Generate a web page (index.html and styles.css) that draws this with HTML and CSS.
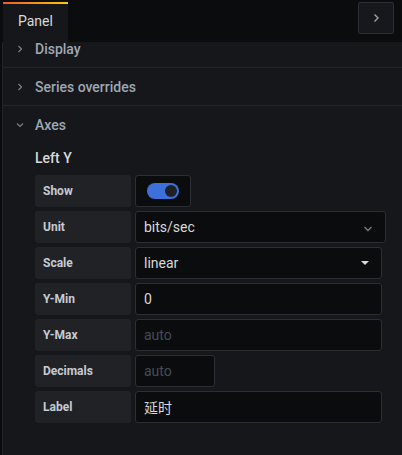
FILE: index.html
```html
<!DOCTYPE html>
<html lang="en">
<head>
    <meta charset="UTF-8">
    <title>Panel editor</title>
    <link rel="stylesheet" href="styles.css">
</head>
<body>

<div class="topbar">
    <div class="tab">Panel</div>
    <button class="collapse-btn">
        <svg width="10" height="10" viewBox="0 0 10 10"><path d="M3.5 1.5 L7 5 L3.5 8.5" fill="none" stroke="#9fa1a6" stroke-width="1.4"/></svg>
    </button>
</div>

<div class="panel">
    <div class="section first">
        <svg class="chev" width="8" height="8" viewBox="0 0 8 8"><path d="M2.5 1 L5.5 4 L2.5 7" fill="none" stroke="#7b8087" stroke-width="1.2"/></svg>Display
    </div>
    <div class="section">
        <svg class="chev" width="8" height="8" viewBox="0 0 8 8"><path d="M2.5 1 L5.5 4 L2.5 7" fill="none" stroke="#7b8087" stroke-width="1.2"/></svg>Series overrides
    </div>
    <div class="section open">
        <svg class="chev" width="8" height="8" viewBox="0 0 8 8"><path d="M1 2.5 L4 5.5 L7 2.5" fill="none" stroke="#7b8087" stroke-width="1.2"/></svg>Axes
    </div>

    <div class="axis">
        <h3>Left Y</h3>
        <div class="field">
            <label>Show</label>
            <div class="switch-box"><span class="switch"><span class="knob"></span></span></div>
        </div>
        <div class="field">
            <label>Unit</label>
            <div class="input select wide">bits/sec
                <svg class="arrow" width="10" height="6" viewBox="0 0 10 6"><path d="M1.5 1 L5 4.5 L8.5 1" fill="none" stroke="#7b8087" stroke-width="1.3"/></svg>
            </div>
        </div>
        <div class="field">
            <label>Scale</label>
            <div class="input select">linear
                <svg class="arrow" width="8" height="4" viewBox="0 0 8 4"><path d="M0 0 L8 0 L4 4 Z" fill="#d8d9da"/></svg>
            </div>
        </div>
        <div class="field">
            <label>Y-Min</label>
            <div class="input">0</div>
        </div>
        <div class="field">
            <label>Y-Max</label>
            <div class="input placeholder">auto</div>
        </div>
        <div class="field">
            <label>Decimals</label>
            <div class="input small placeholder">auto</div>
        </div>
        <div class="field">
            <label>Label</label>
            <div class="input">延时</div>
        </div>
    </div>
</div>

</body>
</html>
```

FILE: styles.css
```css
body { margin: 0; background-color: #0b0c0e; font-family: Roboto, "Noto Sans CJK SC", sans-serif; color: #ccccdc; height: 455px; display: flex; flex-direction: column; overflow: hidden; }

.topbar { height: 42px; display: flex; align-items: flex-start; flex-shrink: 0; }
.tab { margin: 2px 0 0 3px; width: 50px; height: 38px; padding-left: 15px; background-color: #16171b; border-top: 2px solid transparent; border-image: linear-gradient(90deg, #f05a28, #fbca0a) 1; font-size: 14px; line-height: 35px; color: #d8d9da; }
.collapse-btn { margin: 2px 8px 0 auto; width: 36px; height: 32px; background-color: #17181c; border: 1px solid #2c2e33; border-radius: 2px; display: flex; align-items: center; justify-content: center; padding: 0; }

.panel { flex: 1; margin-left: 2px; border-left: 1px solid #222428; background-color: #16171b; overflow: hidden; }
.section { height: 37px; border-bottom: 1px solid #222428; display: flex; align-items: center; font-size: 14px; font-weight: 500; color: #9fa7b3; }
.section.first { margin-top: -12px; }
.section.open { border-bottom: none; }
.chev { margin: 0 11px 0 13px; flex-shrink: 0; }

.axis { padding: 0 0 0 32px; }
.axis h3 { margin: 7px 0 9px; font-size: 14px; font-weight: 500; color: #d8d9da; line-height: 16px; }

.field { display: flex; gap: 4px; margin-bottom: 4px; height: 32px; }
.field label { width: 88px; padding-left: 8px; background-color: #202226; border-radius: 3px; font-size: 12px; font-weight: 700; color: #c7cbd1; display: flex; align-items: center; }
.input { width: 237px; padding: 0 0 0 8px; background-color: #0b0c0e; border: 1px solid #2c2e33; border-radius: 3px; font-size: 14px; color: #d8d9da; display: flex; align-items: center; position: relative; }
.input.wide { width: 241px; }
.input.small { width: 70px; }
.input.placeholder { color: #464c54; }
.select .arrow { position: absolute; right: 12px; top: 13px; }
.select.wide .arrow { right: 12px; top: 14px; }

.switch-box { width: 54px; background-color: #0b0c0e; border: 1px solid #2c2e33; border-radius: 3px; display: flex; align-items: center; }
.switch { margin-left: 11px; width: 32px; height: 16px; border-radius: 8px; background-color: #3d71d9; position: relative; }
.knob { position: absolute; right: 2px; top: 2px; width: 12px; height: 12px; border-radius: 50%; background-color: #1f2126; }
```
